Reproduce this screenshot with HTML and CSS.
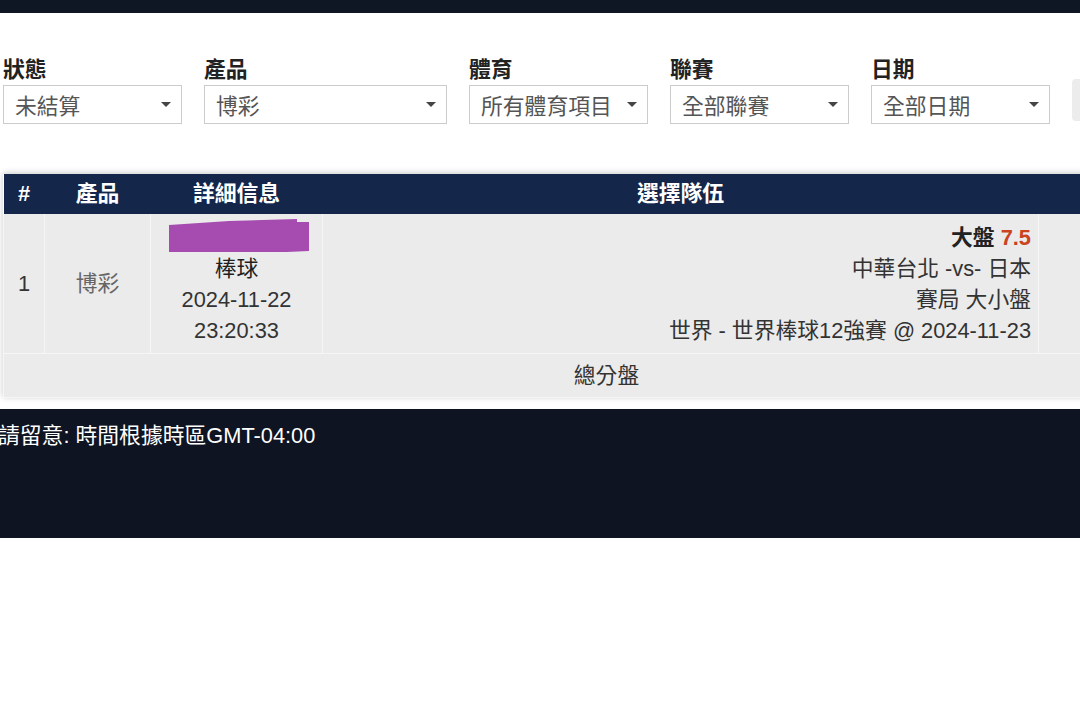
FILE: index.html
```html
<!DOCTYPE html>
<html lang="zh-Hant">
<head>
<meta charset="utf-8">
<title>投注記錄</title>
<link rel="stylesheet" href="styles.css">
</head>
<body>
<div class="page">
  <div class="topbar"></div>

  <div class="filters">
    <div class="field w179">
      <div class="label">狀態</div>
      <div class="select"><span>未結算</span><i class="caret"></i></div>
    </div>
    <div class="field w243">
      <div class="label">產品</div>
      <div class="select"><span>博彩</span><i class="caret"></i></div>
    </div>
    <div class="field w179">
      <div class="label">體育</div>
      <div class="select"><span>所有體育項目</span><i class="caret"></i></div>
    </div>
    <div class="field w179">
      <div class="label">聯賽</div>
      <div class="select"><span>全部聯賽</span><i class="caret"></i></div>
    </div>
    <div class="field w179">
      <div class="label">日期</div>
      <div class="select"><span>全部日期</span><i class="caret"></i></div>
    </div>
    <div class="btn"></div>
  </div>

  <div class="table-wrap">
    <table class="bets">
      <colgroup>
        <col class="c1"><col class="c2"><col class="c3"><col class="c4"><col class="c5">
      </colgroup>
      <thead>
        <tr>
          <th>#</th>
          <th>產品</th>
          <th>詳細信息</th>
          <th>選擇隊伍</th>
          <th></th>
        </tr>
      </thead>
      <tbody>
        <tr class="main-row">
          <td class="num">1</td>
          <td class="prod">博彩</td>
          <td class="detail">
            <div class="redact"><svg width="142" height="34" viewBox="0 0 142 34"><polygon points="0,6 60,2 128,0 128,3 140,3 140,32 118,33 0,33" fill="#a64cb1"/></svg></div>
            <div class="sport">棒球</div>
            <div>2024-11-22</div>
            <div>23:20:33</div>
          </td>
          <td class="pick">
            <div class="bold">大盤 <span class="odds">7.5</span></div>
            <div>中華台北 -vs- 日本</div>
            <div>賽局 大小盤</div>
            <div>世界 - 世界棒球12強賽 @ 2024-11-23</div>
          </td>
          <td></td>
        </tr>
        <tr class="sub-row">
          <td colspan="5">總分盤</td>
        </tr>
      </tbody>
    </table>
  </div>

  <div class="footer">
    <p class="note">請留意: 時間根據時區GMT-04:00</p>
  </div>
</div>
</body>
</html>
```

FILE: styles.css
```css
html, body {
  margin: 0;
  padding: 0;
  background: #ffffff;
  overflow: hidden;
}

body {
  font-family: "Liberation Sans", "Noto Sans CJK TC", sans-serif;
  color: #333333;
  font-size: 21.8px;
}

.page {
  width: 1080px;
  overflow: hidden;
}

.topbar {
  height: 13px;
  background: #0f1725;
}

.filters {
  display: flex;
  gap: 22px;
  padding: 44px 0 0 3px;
  align-items: flex-end;
}

.field {
  display: flex;
  flex-direction: column;
  flex: none;
}

.w179 { width: 179px; }
.w243 { width: 243px; }

.label {
  font-weight: bold;
  font-size: 21.8px;
  line-height: 26px;
  color: #222222;
  margin-bottom: 2px;
}

.select {
  height: 37px;
  border: 1px solid #cccccc;
  background: #ffffff;
  display: flex;
  align-items: center;
  justify-content: space-between;
  padding: 0 10px 0 11px;
  color: #555555;
  font-size: 21.8px;
}

.caret {
  width: 0;
  height: 0;
  border-left: 5.5px solid transparent;
  border-right: 5.5px solid transparent;
  border-top: 5.5px solid #444444;
}

.btn {
  width: 40px;
  height: 42px;
  background: #ececec;
  border-radius: 4px;
  margin-bottom: 3px;
  flex: none;
}

.table-wrap {
  margin-top: 50px;
  padding-left: 3px;
}

.bets {
  width: 1206px;
  table-layout: fixed;
  border-collapse: collapse;
  box-shadow: 0 -1px 6px rgba(0, 0, 0, 0.22);
}

.c1 { width: 41px; }
.c2 { width: 106px; }
.c3 { width: 172px; }
.c4 { width: 716px; }
.c5 { width: 171px; }

.bets thead th {
  background: #14264a;
  color: #ffffff;
  font-weight: bold;
  height: 40px;
  padding: 0;
  text-align: center;
  line-height: 40px;
  font-size: 21.8px;
}

.bets tbody td {
  background: #ebebeb;
  border: 1px solid #f6f6f6;
  padding: 0 7px;
  vertical-align: middle;
  line-height: 31px;
}

.bets tbody tr:first-child td {
  border-top: none;
}

.main-row td {
  height: 139px;
}

.num {
  text-align: center;
  color: #333333;
}

.prod {
  text-align: center;
  color: #666666;
}

.detail {
  text-align: center;
  color: #333333;
}

.redact {
  height: 29px;
  display: flex;
  justify-content: center;
  align-items: center;
  padding-left: 6px;
  margin-bottom: 2px;
}

.sport {
  font-weight: normal;
  color: #1f1f1f;
}

.pick {
  text-align: right;
  color: #333333;
}

.bold {
  font-weight: bold;
  color: #222222;
}

.odds {
  color: #c9441f;
}

.sub-row td {
  height: 43px;
  text-align: center;
  color: #333333;
}

.footer {
  margin-top: 11px;
  height: 129px;
  background: #0e1421;
  padding-top: 14px;
  box-sizing: border-box;
}

.note {
  margin: 0 0 0 -2px;
  color: #ffffff;
  line-height: 26px;
  font-size: 21.8px;
}
```
